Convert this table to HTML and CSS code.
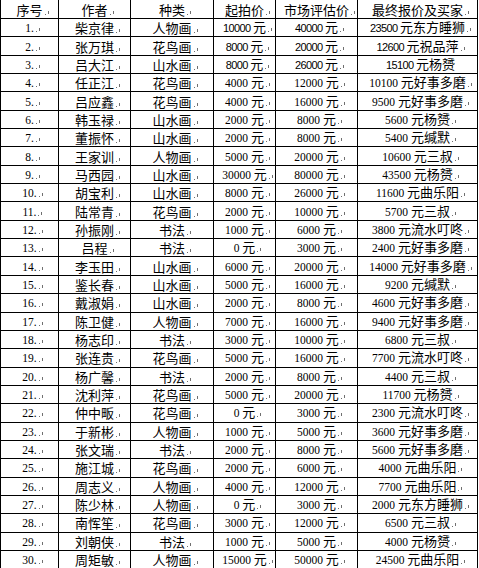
FILE: index.html
```html
<!DOCTYPE html>
<html lang="zh">
<head>
<meta charset="utf-8">
<link rel="stylesheet" href="styles.css">
</head>
<body>
<table class="sheet">
<colgroup><col class="c1"><col class="c2"><col class="c3"><col class="c4"><col class="c5"><col class="c6"></colgroup>
<thead>
<tr class="head"><td>序号<i class="pm"></i></td><td>作者<i class="pm"></i></td><td>种类<i class="pm"></i></td><td>起拍价<i class="pm"></i></td><td>市场评估价<i class="pm"></i></td><td>最终报价及买家<i class="pm"></i></td></tr>
</thead>
<tbody>
<tr class="sans"><td><span class="r">1.</span><i class="pm"></i></td><td>柴京律<i class="pm"></i></td><td>人物画<i class="pm"></i></td><td><span class="n">10000 </span>元<i class="pm"></i></td><td><span class="n">40000 </span>元<i class="pm"></i></td><td><span class="n">23500 </span>元东方睡狮<i class="pm"></i></td></tr>
<tr class="sans"><td><span class="r">2.</span><i class="pm"></i></td><td>张万琪<i class="pm"></i></td><td>花鸟画<i class="pm"></i></td><td><span class="n">8000 </span>元<i class="pm"></i></td><td><span class="n">20000 </span>元<i class="pm"></i></td><td><span class="n">12600 </span>元祝品萍<i class="pm"></i></td></tr>
<tr class="sans"><td><span class="r">3.</span><i class="pm"></i></td><td>吕大江<i class="pm"></i></td><td>山水画<i class="pm"></i></td><td><span class="n">8000 </span>元<i class="pm"></i></td><td><span class="n">26000 </span>元<i class="pm"></i></td><td><span class="n">15100 </span>元杨赟</td></tr>
<tr><td><span class="r">4.</span><i class="pm"></i></td><td>任正江<i class="pm"></i></td><td>花鸟画<i class="pm"></i></td><td><span class="n">4000 </span>元<i class="pm"></i></td><td><span class="n">12000 </span>元<i class="pm"></i></td><td><span class="n">10100 </span>元好事多磨<i class="pm"></i></td></tr>
<tr><td><span class="r">5.</span><i class="pm"></i></td><td>吕应鑫<i class="pm"></i></td><td>花鸟画<i class="pm"></i></td><td><span class="n">4000 </span>元<i class="pm"></i></td><td><span class="n">16000 </span>元<i class="pm"></i></td><td><span class="n">9500 </span>元好事多磨<i class="pm"></i></td></tr>
<tr><td><span class="r">6.</span><i class="pm"></i></td><td>韩玉禄<i class="pm"></i></td><td>山水画<i class="pm"></i></td><td><span class="n">2000 </span>元<i class="pm"></i></td><td><span class="n">8000 </span>元<i class="pm"></i></td><td><span class="n">5600 </span>元杨赟<i class="pm"></i></td></tr>
<tr><td><span class="r">7.</span><i class="pm"></i></td><td>董振怀<i class="pm"></i></td><td>山水画<i class="pm"></i></td><td><span class="n">2000 </span>元<i class="pm"></i></td><td><span class="n">8000 </span>元<i class="pm"></i></td><td><span class="n">5400 </span>元缄默<i class="pm"></i></td></tr>
<tr><td><span class="r">8.</span><i class="pm"></i></td><td>王家训<i class="pm"></i></td><td>人物画<i class="pm"></i></td><td><span class="n">5000 </span>元<i class="pm"></i></td><td><span class="n">20000 </span>元<i class="pm"></i></td><td><span class="n">10600 </span>元三叔<i class="pm"></i></td></tr>
<tr><td><span class="r">9.</span><i class="pm"></i></td><td>马西园<i class="pm"></i></td><td>山水画<i class="pm"></i></td><td><span class="n">30000 </span>元<i class="pm"></i></td><td><span class="n">80000 </span>元<i class="pm"></i></td><td><span class="n">43500 </span>元杨赟<i class="pm"></i></td></tr>
<tr><td><span class="r">10.</span><i class="pm"></i></td><td>胡宝利<i class="pm"></i></td><td>山水画<i class="pm"></i></td><td><span class="n">8000 </span>元<i class="pm"></i></td><td><span class="n">26000 </span>元<i class="pm"></i></td><td><span class="n">11600 </span>元曲乐阳<i class="pm"></i></td></tr>
<tr><td><span class="r">11.</span><i class="pm"></i></td><td>陆常青<i class="pm"></i></td><td>花鸟画<i class="pm"></i></td><td><span class="n">2000 </span>元<i class="pm"></i></td><td><span class="n">10000 </span>元<i class="pm"></i></td><td><span class="n">5700 </span>元三叔<i class="pm"></i></td></tr>
<tr><td><span class="r">12.</span><i class="pm"></i></td><td>孙振刚<i class="pm"></i></td><td>书法<i class="pm"></i></td><td><span class="n">1000 </span>元<i class="pm"></i></td><td><span class="n">6000 </span>元<i class="pm"></i></td><td><span class="n">3800 </span>元流水叮咚<i class="pm"></i></td></tr>
<tr><td><span class="r">13.</span><i class="pm"></i></td><td>吕程<i class="pm"></i></td><td>书法<i class="pm"></i></td><td><span class="n">0 </span>元<i class="pm"></i></td><td><span class="n">3000 </span>元<i class="pm"></i></td><td><span class="n">2400 </span>元好事多磨<i class="pm"></i></td></tr>
<tr><td><span class="r">14.</span><i class="pm"></i></td><td>李玉田<i class="pm"></i></td><td>山水画<i class="pm"></i></td><td><span class="n">6000 </span>元<i class="pm"></i></td><td><span class="n">20000 </span>元<i class="pm"></i></td><td><span class="n">14000 </span>元好事多磨<i class="pm"></i></td></tr>
<tr><td><span class="r">15.</span><i class="pm"></i></td><td>鉴长春<i class="pm"></i></td><td>山水画<i class="pm"></i></td><td><span class="n">5000 </span>元<i class="pm"></i></td><td><span class="n">16000 </span>元<i class="pm"></i></td><td><span class="n">9200 </span>元缄默<i class="pm"></i></td></tr>
<tr><td><span class="r">16.</span><i class="pm"></i></td><td>戴淑娟<i class="pm"></i></td><td>山水画<i class="pm"></i></td><td><span class="n">2000 </span>元<i class="pm"></i></td><td><span class="n">8000 </span>元<i class="pm"></i></td><td><span class="n">4600 </span>元好事多磨<i class="pm"></i></td></tr>
<tr><td><span class="r">17.</span><i class="pm"></i></td><td>陈卫健<i class="pm"></i></td><td>人物画<i class="pm"></i></td><td><span class="n">7000 </span>元<i class="pm"></i></td><td><span class="n">16000 </span>元<i class="pm"></i></td><td><span class="n">9400 </span>元好事多磨<i class="pm"></i></td></tr>
<tr><td><span class="r">18.</span><i class="pm"></i></td><td>杨志印<i class="pm"></i></td><td>书法<i class="pm"></i></td><td><span class="n">3000 </span>元<i class="pm"></i></td><td><span class="n">10000 </span>元<i class="pm"></i></td><td><span class="n">6800 </span>元三叔<i class="pm"></i></td></tr>
<tr><td><span class="r">19.</span><i class="pm"></i></td><td>张连贵<i class="pm"></i></td><td>花鸟画<i class="pm"></i></td><td><span class="n">5000 </span>元<i class="pm"></i></td><td><span class="n">16000 </span>元<i class="pm"></i></td><td><span class="n">7700 </span>元流水叮咚<i class="pm"></i></td></tr>
<tr><td><span class="r">20.</span><i class="pm"></i></td><td>杨广馨<i class="pm"></i></td><td>书法<i class="pm"></i></td><td><span class="n">2000 </span>元<i class="pm"></i></td><td><span class="n">8000 </span>元<i class="pm"></i></td><td><span class="n">4400 </span>元三叔<i class="pm"></i></td></tr>
<tr><td><span class="r">21.</span><i class="pm"></i></td><td>沈利萍<i class="pm"></i></td><td>花鸟画<i class="pm"></i></td><td><span class="n">5000 </span>元<i class="pm"></i></td><td><span class="n">20000 </span>元<i class="pm"></i></td><td><span class="n">11700 </span>元杨赟<i class="pm"></i></td></tr>
<tr><td><span class="r">22.</span><i class="pm"></i></td><td>仲中畈<i class="pm"></i></td><td>花鸟画<i class="pm"></i></td><td><span class="n">0 </span>元<i class="pm"></i></td><td><span class="n">3000 </span>元<i class="pm"></i></td><td><span class="n">2300 </span>元流水叮咚<i class="pm"></i></td></tr>
<tr><td><span class="r">23.</span><i class="pm"></i></td><td>于新彬<i class="pm"></i></td><td>人物画<i class="pm"></i></td><td><span class="n">1000 </span>元<i class="pm"></i></td><td><span class="n">5000 </span>元<i class="pm"></i></td><td><span class="n">3600 </span>元好事多磨<i class="pm"></i></td></tr>
<tr><td><span class="r">24.</span><i class="pm"></i></td><td>张文瑞<i class="pm"></i></td><td>书法<i class="pm"></i></td><td><span class="n">2000 </span>元<i class="pm"></i></td><td><span class="n">8000 </span>元<i class="pm"></i></td><td><span class="n">5600 </span>元好事多磨<i class="pm"></i></td></tr>
<tr><td><span class="r">25.</span><i class="pm"></i></td><td>施江城<i class="pm"></i></td><td>花鸟画<i class="pm"></i></td><td><span class="n">2000 </span>元<i class="pm"></i></td><td><span class="n">6000 </span>元<i class="pm"></i></td><td><span class="n">4000 </span>元曲乐阳<i class="pm"></i></td></tr>
<tr><td><span class="r">26.</span><i class="pm"></i></td><td>周志义<i class="pm"></i></td><td>人物画<i class="pm"></i></td><td><span class="n">4000 </span>元<i class="pm"></i></td><td><span class="n">12000 </span>元<i class="pm"></i></td><td><span class="n">7700 </span>元曲乐阳<i class="pm"></i></td></tr>
<tr><td><span class="r">27.</span><i class="pm"></i></td><td>陈少林<i class="pm"></i></td><td>人物画<i class="pm"></i></td><td><span class="n">0 </span>元<i class="pm"></i></td><td><span class="n">3000 </span>元<i class="pm"></i></td><td><span class="n">2000 </span>元东方睡狮<i class="pm"></i></td></tr>
<tr><td><span class="r">28.</span><i class="pm"></i></td><td>南恽笙<i class="pm"></i></td><td>花鸟画<i class="pm"></i></td><td><span class="n">3000 </span>元<i class="pm"></i></td><td><span class="n">12000 </span>元<i class="pm"></i></td><td><span class="n">6500 </span>元三叔<i class="pm"></i></td></tr>
<tr><td><span class="r">29.</span><i class="pm"></i></td><td>刘朝侠<i class="pm"></i></td><td>书法<i class="pm"></i></td><td><span class="n">1000 </span>元<i class="pm"></i></td><td><span class="n">5000 </span>元<i class="pm"></i></td><td><span class="n">4000 </span>元杨赟<i class="pm"></i></td></tr>
<tr><td><span class="r">30.</span><i class="pm"></i></td><td>周矩敏<i class="pm"></i></td><td>人物画<i class="pm"></i></td><td><span class="n">15000 </span>元<i class="pm"></i></td><td><span class="n">50000 </span>元<i class="pm"></i></td><td><span class="n">24500 </span>元曲乐阳<i class="pm"></i></td></tr>
</tbody>
</table>
</body>
</html>
```

FILE: styles.css
```css
html, body {
  margin: 0;
  padding: 0;
  background: #fff;
}

.sheet {
  border-collapse: collapse;
  table-layout: fixed;
  width: 477px;
  border: 1px solid #000;
  border-top: none;
  font-family: "Noto Sans CJK SC", "Liberation Sans", sans-serif;
  font-size: 13px;
  color: #000;
}

.c1 { width: 58px; }
.c2 { width: 72px; }
.c3 { width: 83px; }
.c4 { width: 62px; }
.c5 { width: 82px; }
.c6 { width: 120px; }

.sheet td {
  border: 1px solid #000;
  padding: 0 0 0 6px;
  text-align: center;
  vertical-align: middle;
  line-height: 15px;
  white-space: nowrap;
  overflow: hidden;
}

.sheet tr { height: 18.35px; }
.sheet tr.head { height: 18.5px; }
.sheet tr.head td { border-top: none; }

.n, .r {
  font-family: "Liberation Serif", serif;
  font-size: 11.5px;
}

.sans .n {
  font-family: "Liberation Sans", sans-serif;
  font-size: 11px;
  letter-spacing: -0.6px;
}

.pm {
  display: inline-block;
  width: 4px;
  height: 4px;
  margin-left: 2px;
  background:
    linear-gradient(#6f6f6f, #6f6f6f) left bottom / 1px 1px no-repeat,
    linear-gradient(#6f6f6f, #6f6f6f) right top / 1px 3px no-repeat;
}
```
